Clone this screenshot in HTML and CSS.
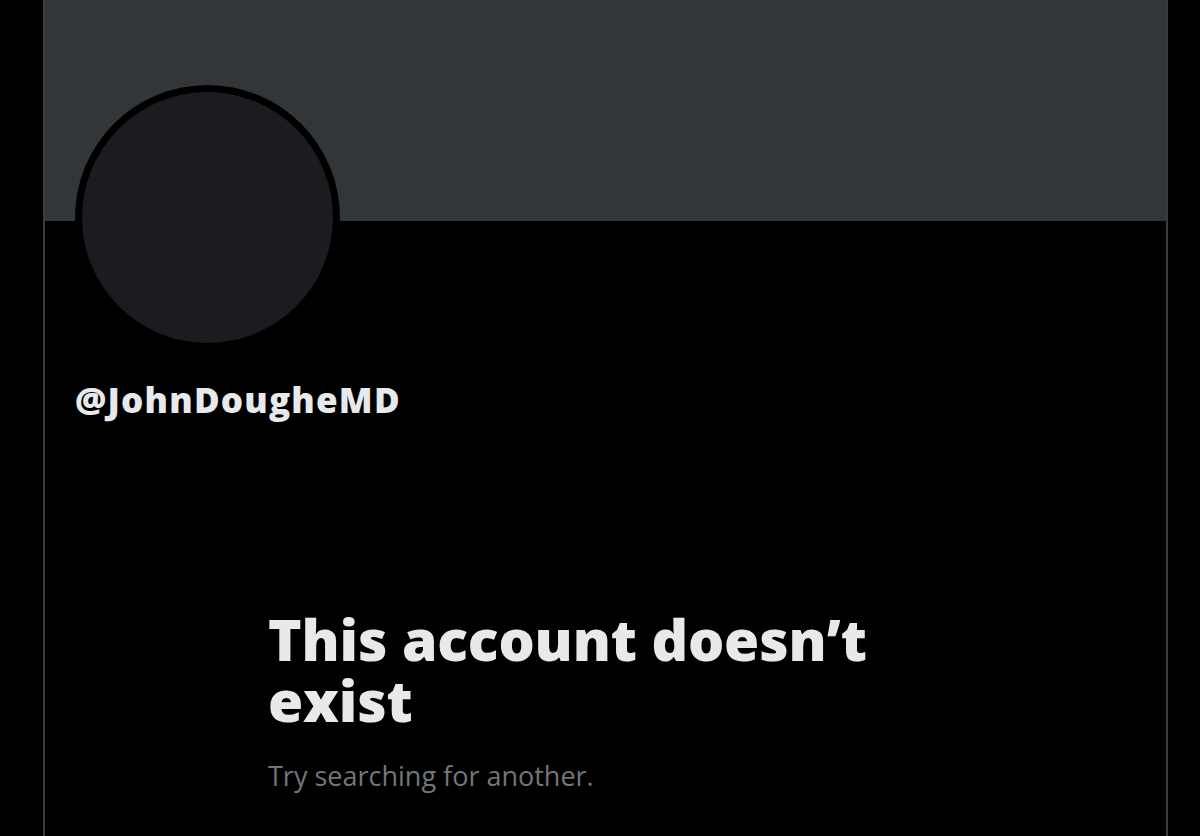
FILE: index.html
```html
<!DOCTYPE html>
<html>
<head>
<meta charset="utf-8">
<link rel="stylesheet" href="styles.css">
</head>
<body>
<div class="column">
  <div class="banner"></div>
  <div class="avatar"><div class="avatar-inner"></div></div>
  <div class="handle">@JohnDougheMD</div>
  <div class="empty">
    <h1 class="empty-title">This account doesn’t exist</h1>
    <p class="empty-sub">Try searching for another.</p>
  </div>
</div>
</body>
</html>
```
FILE: styles.css
```css
html, body {
  margin: 0;
  padding: 0;
  background: #000;
  height: 836px;
  overflow: hidden;
}
.column {
  margin-left: 43px;
  width: 1121px;
  height: 836px;
  border-left: 2px solid #3a3b3e;
  border-right: 2px solid #3a3b3e;
  font-family: "Open Sans", "Liberation Sans", sans-serif;
}
.banner {
  height: 221px;
  background: #333639;
}
.avatar {
  width: 265px;
  height: 265px;
  box-sizing: border-box;
  border-radius: 50%;
  background: #000;
  padding: 7px;
  margin-top: -136px;
  margin-left: 30px;
}
.avatar-inner {
  width: 100%;
  height: 100%;
  border-radius: 50%;
  background: #1b1c1f;
}
.handle {
  margin-left: 30px;
  margin-top: 30px;
  font-size: 35px;
  font-weight: 800;
  color: #e7e9ea;
  line-height: 40px;
  letter-spacing: 1.2px;
}
.empty {
  margin-left: 223px;
  margin-top: 189px;
  width: 640px;
}
.empty-title {
  margin: 0;
  font-size: 57px;
  font-weight: 800;
  line-height: 61px;
  color: #e7e9ea;
  letter-spacing: -0.15px;
}
.empty-sub {
  margin: 29px 0 0;
  font-size: 27px;
  line-height: 32px;
  color: #71767b;
}
```
